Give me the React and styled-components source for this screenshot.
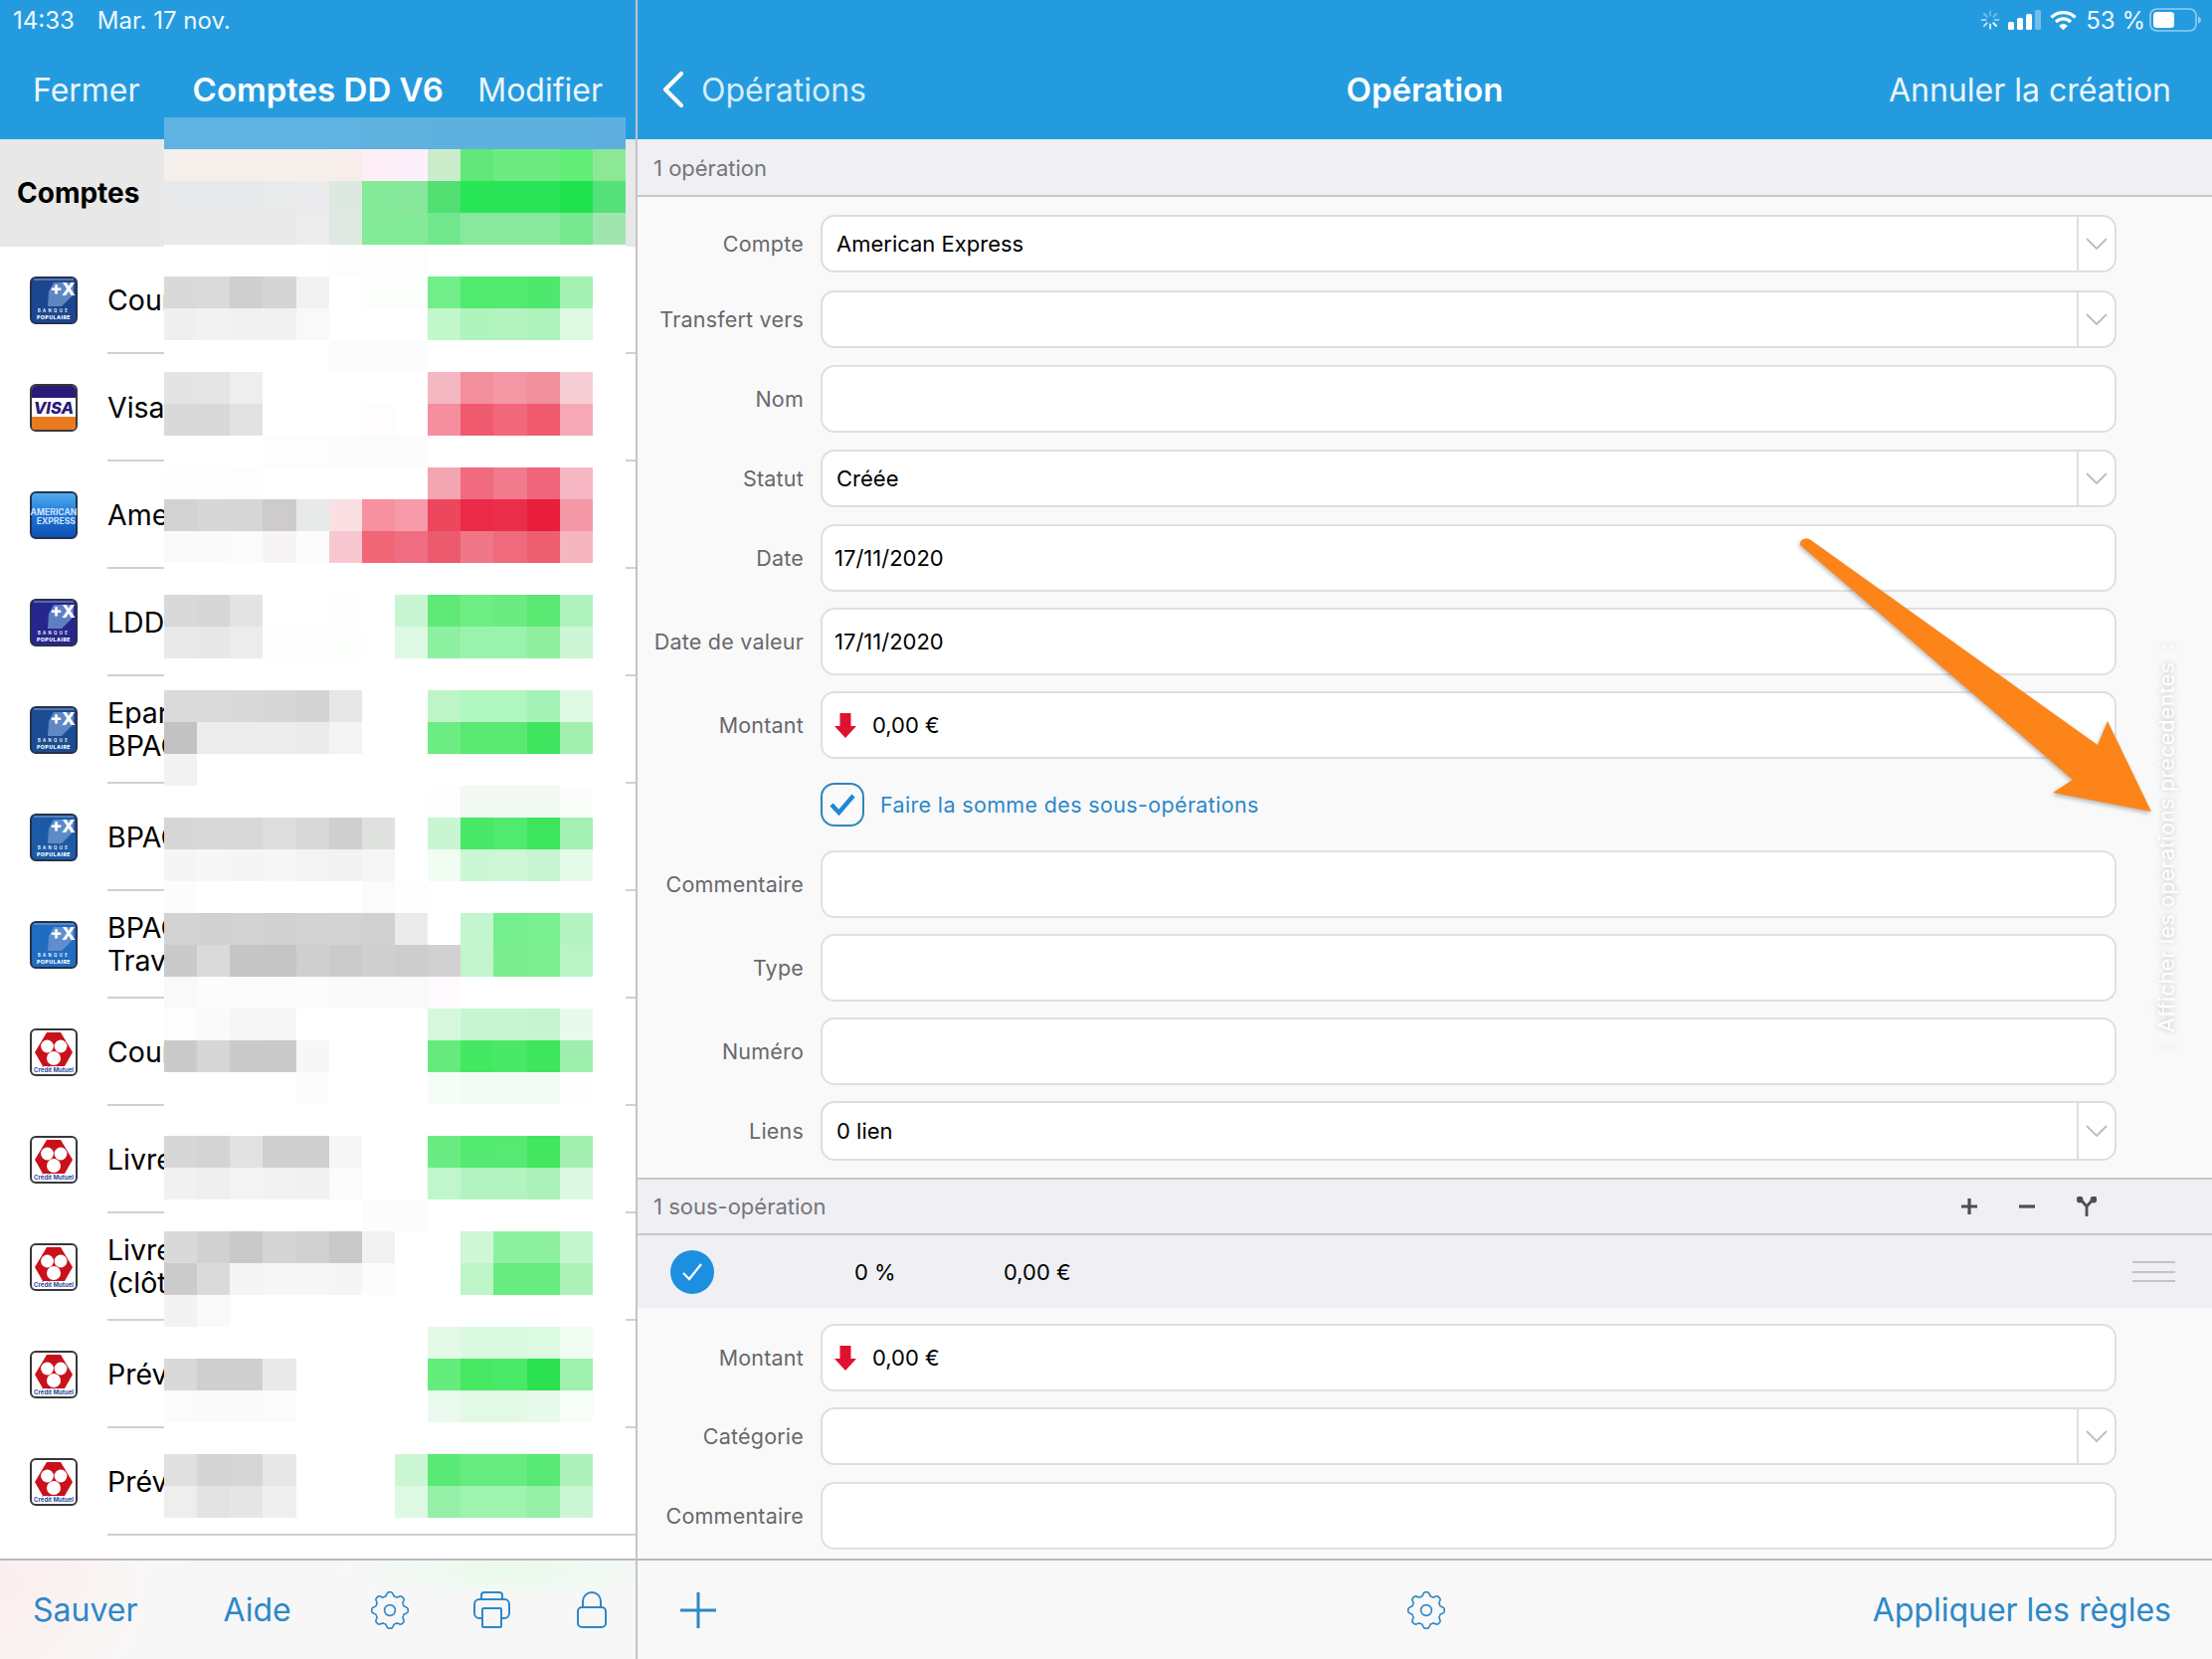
import React from "react";
import styled, { createGlobalStyle } from "styled-components";

const FONT = `Inter, "Liberation Sans", sans-serif`;
const BLUE = "#259bdf";
const TINT = "#2d88c8";

const GlobalStyle = createGlobalStyle`
  html, body { margin: 0; padding: 0; background: #f9f9f9; }
  * { box-sizing: border-box; }
  body { font-family: ${FONT}; }
`;

// pixelated cover over the accounts, one line per 32px row; missing cells are white
const MOSAIC = [
  "5fb3e2 5fb3e2 5fb3e2 5fb3e2 5fb3e2 5fb3e2 5fb2de 5fb2de 5eb1df 5eb1df 5eb1df 5eb1df 5eb1df 5faee0",
  "f5efec f5efec f5efec f5efec f5efec f7eeec fdeff5 fdf0fb cbeccb 62e87a 6eea82 6eea82 62ed79 8de896",
  "e8e9ea e8e9ea e8e9ea e9eaea ebeaec dde8e0 84e998 87e89b 52e073 28e556 2ae558 2ae558 1fe24d 56e27a",
  "e9e9e9 e9e9e9 e9e9e9 e9e9e9 ececec dfe9e2 83ea97 83ea97 72e88e 88e99e 88e99e 88e99e 76e890 a0e5ad",
  "fff fff fff fff fff fdfdfd fdfdfd fdfdfd",
  "d9d9d9 dadada cfcfcf d5d5d5 f2f2f2 fff fcfefc fcfefc 72ee8a 50ea70 53ea72 4fe86f a3f2b3",
  "efefef f2f2f2 f1f1f1 f1f1f1 f9f9f9 fff fff fff c2f6cb aff3bd b3f3c0 aff2bc ddf9e2",
  "fff fff fff fff fff fcfcfc fcfcfc fcfcfc",
  "e4e4e4 e5e5e5 eeeeee fff fff fff fff fff f4b8c2 f38e9d f497a5 f2909d f6cdd5",
  "d9d9d9 d9d9d9 e2e2e2 fff fff fff fefcfc fff f58fa0 f05a6f f3677c ef5a6e f6a8b6",
  "fff fff fff fdfdfd fdfdfd fcfcfc fbfbfb fbfbfb",
  "fefefe fefefe fdfdfd fff fff fff fff fff f4a5b2 f06a80 f27a8d ef647a f6b6c3",
  "d2d2d2 d6d6d6 d6d6d6 cdcbcc e8eaea fadfe3 f6919f f79aa9 ec475d ea2a46 ea2e49 e91e3c f498a8",
  "fafafa fafafa fbfbfb f6f4f5 fcfcfc f8c8d2 f06677 f06c80 ec5a6e f07788 ee6a7c ec5e70 f5b6c0",
  "",
  "d9d9d9 d7d7d7 e3e3e3 fff fff fdfefd fff c8f6d2 5fea78 70ee86 6ceb82 5ae873 b0f2bd",
  "e9e9e9 e8e8e8 ececec fdfdfd fdfdfd fcfefc fff def9e4 8ef0a1 9af3ac 9af3ac 8fef9f ccf6d4",
  "",
  "dadada dadada d9d9d9 d7d7d7 d3d3d3 e7e7e7 fff fff bdf5c9 aff6c0 aff6c0 a5f3b7 dff9e4",
  "c2c2c2 ececec ededed ededed ebebeb f4f4f4 fff fff 6cec82 5ae873 5ae873 3fe55f a3efb0",
  "f2f2f2",
  "fff fff fff fff fff fff fff fff fdfefd f2faf3 f2faf3 f2faf3 fbfdfb",
  "d7d7d7 d8d8d8 d8d8d8 dddddd d8d8d8 cfcfcf dfe1df fff c8f6d2 48e868 4fea6e 3ce55c a2f0b4",
  "f5f5f5 f7f7f7 f5f5f5 f6f6f6 f4f4f4 f2f2f2 f5f6f5 fff f1fcf2 cbf7d4 cdf7d6 c9f6d2 e7fbeb",
  "fcfcfc fff fff fff fff fff fbfbfb fefefe",
  "d2d2d2 d1d1d1 d2d2d2 d1d1d1 d2d2d2 d3d3d3 d1d1d1 eaebea fff c3f6ce 75ee8e 78ef90 b3f3c2",
  "cacaca dadada c5c5c5 c5c5c5 cfcfcf cbcbcb cfcfcf cccdcc d2d1d2 c3f5cd 7aed90 7aee91 b9f4c6",
  "f9f9f9 fcfcfc fbfbfb fbfbfb fbfbfb fafafa f9f9f9 f9f9f9 fdf9fc",
  "fdfdfd fafafa f6f6f6 f6f6f6 fff fff fff fff d5f8dc c5f6cf c5f6cf c4f5ce e8fbeb",
  "cacaca d6d6d6 c9c9c9 cacaca f7f7f7 fff fff fff 66ea7e 45e863 49e967 3fe55d 9eefae",
  "fff fff fff fff fcfcfc fff fff fff f6fcf7 f3fbf4 f3fbf4 f4fbf5 fdfefd",
  "",
  "d7d7d7 d4d4d4 e2e2e2 cfcfcf cfcfcf f6f6f6 fff fff 6bec83 54ea71 56ea73 42e65f a3efb0",
  "f1f1f1 efefef f4f4f4 f2f2f2 f1f1f1 fbfbfb fff fff c0f6cb b2f4bf b2f4bf aaf2b8 dcf8e1",
  "fff fff fff fff fff fff fcfcfc fcfcfc",
  "d9d9d9 d1d1d1 c9c9c9 d5d5d5 d0d0d0 c9c9c9 f2f2f2 fff fff cff7d6 8ef0a1 8ef0a1 c4f5cd",
  "cbcbcb dadada f4f4f4 f7f7f7 f7f7f7 f5f5f5 fcfcfc fff fff bdf5c8 66ec80 66ec80 adf2b9",
  "f3f3f3 f9f9f9",
  "fff fff fff fff fff fff fff fff e5f9e9 dbf9e0 dbf9e0 dcf9e1 f1fcf3",
  "d9d9d9 cfcfcf cfcfcf e9e9e9 fff fff fff fff 64ec7c 47e864 4ae967 2ce250 9ff0ae",
  "fbfbfb fafafa fafafa fbfbfb fff fff fff fff ebfaee e2f9e6 e2f9e6 e8faeb f7fdf8",
  "",
  "e0e0e0 d5d5d5 d6d6d6 e7e7e7 fff fff fff cbf6d3 5ae976 66ec80 66ec80 58e874 adf2bb",
  "eeeeee e3e3e3 e6e6e6 efefef fff fff fff def9e4 94f0a7 9ef3ae 9ef3ae 94f0a6 cbf6d3",
];

const ACCOUNTS = [
  { bank: "bp", color: "#1c4690", lines: ["Courant"] },
  { bank: "visa", lines: ["Visa"] },
  { bank: "amex", lines: ["American Express"] },
  { bank: "bp", color: "#27268c", lines: ["LDD"] },
  { bank: "bp", color: "#1b4c92", lines: ["Epargne", "BPACE"] },
  { bank: "bp", color: "#1d5aa6", lines: ["BPACE"] },
  { bank: "bp", color: "#1f6cc0", lines: ["BPACE", "Travaux"] },
  { bank: "cm", lines: ["Courant"] },
  { bank: "cm", lines: ["Livret"] },
  { bank: "cm", lines: ["Livret", "(clôturé)"] },
  { bank: "cm", lines: ["Prévoyance"] },
  { bank: "cm", lines: ["Prévoyance"] },
];

const Page = styled.div`
  width: 2224px;
  height: 1668px;
  display: flex;
  overflow: hidden;
  position: relative;
`;
const LeftPane = styled.div`
  width: 641px;
  flex-shrink: 0;
  display: flex;
  flex-direction: column;
  position: relative;
  background: #fff;
  border-right: 2px solid #c4c4c8;
`;
const RightPane = styled.div`
  flex: 1;
  display: flex;
  flex-direction: column;
  position: relative;
  background: #f9f9f9;
`;
const Header = styled.header`
  height: 140px;
  flex-shrink: 0;
  background: ${BLUE};
  color: #fff;
`;
const StatusBar = styled.div`
  height: 40px;
  display: flex;
  align-items: center;
  justify-content: ${(p) => (p.$right ? "flex-end" : "flex-start")};
  padding: ${(p) => (p.$right ? "0 11px 0 0" : "0 0 0 13px")};
  font-size: 24px;
  color: #eef7fd;
`;
const StatusDate = styled.span`
  margin-left: 23px;
`;
const StatusIcons = styled.div`
  display: flex;
  align-items: center;
  gap: 9px;
`;
const NavLeft = styled.nav`
  height: 100px;
  display: flex;
  align-items: center;
  padding: 0 33px;
  font-size: 32px;
`;
const NavRight = styled.nav`
  height: 100px;
  display: grid;
  grid-template-columns: 1fr auto 1fr;
  align-items: center;
  padding: 0 41px;
  font-size: 32px;
`;
const NavTitle = styled.div`
  font-size: 33px;
  font-weight: 600;
  margin-left: ${(p) => p.$offset || 0}px;
`;
const NavAction = styled.div`
  color: #eaf6fd;
  text-align: ${(p) => (p.$end ? "right" : "left")};
  margin-left: ${(p) => (p.$end ? "auto" : 0)};
`;
const BackLink = styled.div`
  display: flex;
  align-items: center;
  gap: 17px;
  margin-left: -16px;
  color: #d6edfa;
`;

const AccountsHead = styled.div`
  height: 108px;
  flex-shrink: 0;
  display: flex;
  align-items: center;
  padding-left: 17px;
  background: #e8e8e8;
  color: #000;
  font-size: 28px;
  font-weight: 700;
`;
const AccountList = styled.div`
  flex: 1;
`;
const AccountRow = styled.div`
  height: 108px;
  display: flex;
`;
const BankSlot = styled.div`
  width: 108px;
  flex-shrink: 0;
  display: flex;
  align-items: center;
  padding-left: 30px;
`;
const AccountBody = styled.div`
  flex: 1;
  min-width: 0;
  display: flex;
  flex-direction: column;
  justify-content: center;
  border-bottom: 2px solid #d0d0d4;
  font-size: 28.5px;
  line-height: 33px;
  color: #000;
  white-space: nowrap;
  overflow: hidden;
`;
const Mosaic = styled.svg`
  position: absolute;
  left: 165px;
  top: 118px;
  display: block;
`;

const Toolbar = styled.footer`
  height: 101px;
  flex-shrink: 0;
  margin-top: auto;
  display: flex;
  align-items: center;
  border-top: 2px solid #b9b9bc;
  padding: 0 33px;
  color: ${TINT};
  font-size: 32px;
  background: ${(p) =>
    p.$tinted
      ? `radial-gradient(circle at 0 20px, #fdeeee 0, #f8f7f7 150px, transparent 230px),
         radial-gradient(ellipse at 510px 10px, #e9fbec 0, #f7f7f7 170px, transparent 260px), #f7f7f7`
      : "#f8f8f8"};
`;
const ToolLabel = styled.span`
  margin-left: ${(p) => p.$left || 0}px;
`;
const ToolIcon = styled.svg`
  display: block;
  flex-shrink: 0;
  margin-left: ${(p) => p.$left || 0}px;
  margin-right: ${(p) => p.$right || 0}px;
`;

const SectionBar = styled.div`
  height: ${(p) => p.$h}px;
  flex-shrink: 0;
  display: flex;
  align-items: center;
  padding: ${(p) => (p.$lined ? "0 16px" : "2px 16px 0")};
  background: #efeff4;
  border-bottom: 2px solid #c8c7cc;
  border-top: ${(p) => (p.$lined ? "2px solid #c8c7cc" : "0")};
  color: #76767a;
  font-size: 22px;
`;
const SectionTools = styled.div`
  margin-left: auto;
  margin-right: 100px;
  display: flex;
  align-items: center;
  gap: 42px;
`;
const Form = styled.div`
  flex: none;
  padding-right: 96px;
  padding-bottom: ${(p) => p.$bottom || 0}px;
`;
const FormRow = styled.div`
  display: flex;
  align-items: center;
  margin-top: ${(p) => p.$top ?? 16}px;
`;
const Label = styled.div`
  width: 167px;
  flex-shrink: 0;
  margin-right: 17px;
  text-align: right;
  color: #68686b;
  font-size: 21.5px;
  letter-spacing: 0.2px;
`;
const Field = styled.div`
  flex: 1;
  height: ${(p) => (p.$select ? 58 : 68)}px;
  display: flex;
  align-items: center;
  background: #fff;
  border: ${(p) => (p.$select ? "2.5px solid #dedee0" : "2px solid #e0e0e2")};
  border-radius: 14px;
  padding-left: ${(p) => (p.$select ? 14 : 12)}px;
  color: #000;
  font-size: 22px;
`;
const Liens = styled(Field)`
  height: 60px;
`;
const ChevronBox = styled.div`
  margin-left: auto;
  width: 38px;
  height: 100%;
  display: flex;
  align-items: center;
  justify-content: center;
  border-left: 2px solid #dedee0;
`;
const AmountText = styled.span`
  margin-left: 16px;
`;
const CheckBox = styled.div`
  width: 44px;
  height: 44px;
  display: flex;
  align-items: center;
  justify-content: center;
  border: 2.5px solid #2f86bd;
  border-radius: 14px;
`;
const CheckLabel = styled.div`
  margin-left: 16px;
  color: ${TINT};
  font-size: 21.5px;
  letter-spacing: 0.35px;
`;
const SplitRow = styled.div`
  height: 73px;
  flex-shrink: 0;
  display: flex;
  align-items: center;
  background: #efeff4;
  padding: 0 37px 0 33px;
  color: #000;
  font-size: 22px;
`;
const SplitValue = styled.span`
  width: ${(p) => p.$w}px;
  flex-shrink: 0;
`;
const Circle = styled.div`
  width: 44px;
  height: 44px;
  flex-shrink: 0;
  margin-right: 141px;
  display: flex;
  align-items: center;
  justify-content: center;
  border-radius: 50%;
  background: #1d8fe0;
`;
const Grip = styled.div`
  margin-left: auto;
  width: 43px;
  height: 21px;
  border-top: 2px solid #c4c4c8;
  border-bottom: 2px solid #c4c4c8;
  position: relative;
  &::after {
    content: "";
    position: absolute;
    left: 0;
    right: 0;
    top: 7.5px;
    height: 2px;
    background: #c4c4c8;
  }
`;
const RightTools = styled(Toolbar)`
  padding: 0 41px 0 43px;
  display: grid;
  grid-template-columns: 1fr auto 1fr;
`;
const EndLabel = styled.span`
  text-align: right;
`;
const SideHint = styled.div`
  position: absolute;
  left: ${2165 - 641}px;
  top: 640px;
  height: 424px;
  writing-mode: vertical-rl;
  transform: rotate(180deg);
  text-align: center;
  white-space: pre;
  color: #fff;
  font-size: 21.5px;
  letter-spacing: 0.25px;
  text-shadow: 0 0 6px rgba(0, 0, 0, 0.25);
`;
const ArrowMark = styled.svg`
  position: absolute;
  left: ${1800 - 641}px;
  top: 530px;
  overflow: visible;
  filter: drop-shadow(-1px 2px 2px rgba(0, 0, 0, 0.28));
`;

function gearPath(c, inner, outer) {
  const pts = [];
  for (let i = 0; i < 160; i++) {
    const t = (i / 160) * Math.PI * 2;
    const s = Math.max(-1, Math.min(1, Math.sin(8 * t + Math.PI / 2) * 1.5));
    const r = inner + ((outer - inner) * (s + 1)) / 2;
    pts.push(`${(c + r * Math.sin(t)).toFixed(2)} ${(c - r * Math.cos(t)).toFixed(2)}`);
  }
  return `M${pts.join("L")}Z`;
}

function Gear({ left, right }) {
  return (
    <ToolIcon $left={left} $right={right} width="38" height="38" viewBox="0 0 38 38" fill="none" stroke={TINT} strokeWidth="1.6">
      <path d={gearPath(19, 14.6, 18.2)} strokeLinejoin="round" />
      <circle cx="19" cy="19" r="5.4" />
    </ToolIcon>
  );
}

function Chevron() {
  return (
    <svg width="24" height="14" viewBox="0 0 24 14" fill="none" stroke="#bcbcc0" strokeWidth="1.8">
      <path d="M2 2l10 10L22 2" />
    </svg>
  );
}

function DownArrow() {
  return (
    <svg width="22" height="25" viewBox="0 0 22 25" style={{ flexShrink: 0 }}>
      <path d="M5.5 0h11v13H22L11 25 0 13h5.5z" fill="#e0112f" />
    </svg>
  );
}

function BankLogo({ bank, color }) {
  if (bank === "visa") {
    return (
      <svg width="48" height="48" viewBox="0 0 48 48">
        <rect x="1" y="1" width="46" height="46" rx="5" fill="#fff" stroke="#38383c" strokeWidth="2" />
        <path d="M2 6a4 4 0 0 1 4-4h36a4 4 0 0 1 4 4v8H2z" fill="#2a1a78" />
        <path d="M2 33h44v9a4 4 0 0 1-4 4H6a4 4 0 0 1-4-4z" fill="#ea7a1e" />
        <text x="24" y="29.5" textAnchor="middle" fontFamily={FONT} fontSize="16.5" fontWeight="800" fontStyle="italic" fill="#2a1a78">VISA</text>
      </svg>
    );
  }
  if (bank === "amex") {
    return (
      <svg width="48" height="48" viewBox="0 0 48 48">
        <defs>
          <linearGradient id="amexFill" x1="0" y1="0" x2="0" y2="1">
            <stop offset="0" stopColor="#52aef0" />
            <stop offset="0.5" stopColor="#1f74d6" />
            <stop offset="1" stopColor="#0f4fb4" />
          </linearGradient>
        </defs>
        <rect x="1" y="1" width="46" height="46" rx="5" fill="url(#amexFill)" stroke="#23344e" strokeWidth="2" />
        <text x="24" y="24" textAnchor="middle" fontFamily={FONT} fontSize="8.6" fontWeight="700" fill="#cfe4fb">AMERICAN</text>
        <text x="46" y="33" textAnchor="end" fontFamily={FONT} fontSize="8.6" fontWeight="700" fill="#cfe4fb">EXPRESS</text>
      </svg>
    );
  }
  if (bank === "cm") {
    return (
      <svg width="48" height="48" viewBox="0 0 48 48">
        <rect x="1" y="1" width="46" height="46" rx="5" fill="#fff" stroke="#38383c" strokeWidth="2" />
        <path d="M17 4h14l12 20-8 14H13L5 24z" fill="#c9111c" />
        <circle cx="17.5" cy="18" r="6.4" fill="#fff" />
        <circle cx="31" cy="18" r="6.4" fill="#fff" />
        <circle cx="24" cy="30" r="7" fill="#fff" />
        <text x="24" y="44" textAnchor="middle" fontFamily={FONT} fontSize="6" fontWeight="700" fill="#2c4a9c">Crédit Mutuel</text>
      </svg>
    );
  }
  return (
    <svg width="48" height="48" viewBox="0 0 48 48">
      <rect x="1" y="1" width="46" height="46" rx="5" fill={color} stroke="#26324e" strokeWidth="2" />
      <path d="M4 3h40" stroke="#8ea7d2" strokeWidth="1" />
      <path d="M24 6h20v12L32 30H18l1-15z" fill="#6f96d0" opacity="0.8" />
      <text x="33" y="19" textAnchor="middle" fontFamily={FONT} fontSize="18" fontWeight="800" fill="#fff">+X</text>
      <text x="24" y="36" textAnchor="middle" fontFamily={FONT} fontSize="4.2" fontWeight="600" letterSpacing="2.4" fill="#fff">BANQUE</text>
      <text x="24" y="43" textAnchor="middle" fontFamily={FONT} fontSize="5.2" fontWeight="800" letterSpacing="0.5" fill="#fff">POPULAIRE</text>
    </svg>
  );
}

function MosaicCover() {
  const h = MOSAIC.length * 32;
  return (
    <Mosaic width="464" height={h} viewBox={`0 0 462 ${h}`} preserveAspectRatio="none" shapeRendering="crispEdges">
      {MOSAIC.flatMap((line, row) => {
        const cells = line ? line.split(" ") : [];
        return Array.from({ length: 14 }, (_, col) => (
          <rect key={`${row}-${col}`} x={col * 33} y={row * 32} width="33" height="32" fill={`#${cells[col] || "fff"}`} />
        ));
      })}
    </Mosaic>
  );
}

function StatusGlyphs() {
  return (
    <StatusIcons>
      <svg width="20" height="20" viewBox="0 0 20 20" stroke="#fff" strokeWidth="1.8" strokeLinecap="round">
        <path d="M10 1.5v4" opacity="0.3" />
        <path d="M16 4l-2.8 2.8" opacity="0.35" />
        <path d="M18.5 10h-4" opacity="0.45" />
        <path d="M16 16l-2.8-2.8" opacity="1" />
        <path d="M10 18.5v-4" opacity="0.85" />
        <path d="M4 16l2.8-2.8" opacity="0.7" />
        <path d="M1.5 10h4" opacity="0.55" />
        <path d="M4 4l2.8 2.8" opacity="0.4" />
      </svg>
      <svg width="33" height="22" viewBox="0 0 33 22" fill="#fff" style={{ marginLeft: -1 }}>
        <rect x="0" y="13" width="6" height="8" rx="1.5" />
        <rect x="9" y="9" width="6" height="12" rx="1.5" />
        <rect x="18" y="5" width="6" height="16" rx="1.5" />
        <rect x="27" y="1" width="6" height="20" rx="1.5" opacity="0.35" />
      </svg>
      <svg width="27" height="21" viewBox="0 0 27 21" fill="none" stroke="#fff" strokeWidth="3.2">
        <path d="M1.5 7.5a17 17 0 0 1 24 0" />
        <path d="M6 12a10.6 10.6 0 0 1 15 0" />
        <path d="M13.5 20l-4-4a5.6 5.6 0 0 1 8 0z" fill="#fff" strokeWidth="0.5" />
      </svg>
      <span>53 %</span>
      <svg width="52" height="24" viewBox="0 0 52 24" style={{ marginLeft: -5 }}>
        <rect x="1" y="1" width="46" height="22" rx="6.5" fill="none" stroke="#fff" strokeOpacity="0.5" strokeWidth="1.6" />
        <rect x="4" y="4" width="21" height="16" rx="3.5" fill="#fff" />
        <path d="M49 8.5c2 .5 3 2 3 3.5s-1 3-3 3.5z" fill="#fff" fillOpacity="0.5" />
      </svg>
    </StatusIcons>
  );
}

function SelectRow({ label, value, top }) {
  return (
    <FormRow $top={top}>
      <Label>{label}</Label>
      <Field $select>
        {value}
        <ChevronBox><Chevron /></ChevronBox>
      </Field>
    </FormRow>
  );
}

function InputRow({ label, value, top }) {
  return (
    <FormRow $top={top}>
      <Label>{label}</Label>
      <Field>{value}</Field>
    </FormRow>
  );
}

function AmountRow({ top }) {
  return (
    <FormRow $top={top}>
      <Label>Montant</Label>
      <Field>
        <DownArrow />
        <AmountText>0,00 €</AmountText>
      </Field>
    </FormRow>
  );
}

export default function App() {
  return (
    <Page>
      <GlobalStyle />
      <LeftPane>
        <Header>
          <StatusBar>
            14:33
            <StatusDate>Mar. 17 nov.</StatusDate>
          </StatusBar>
          <NavLeft>
            <NavAction>Fermer</NavAction>
            <NavTitle $offset={53}>Comptes DD V6</NavTitle>
            <NavAction $end>Modifier</NavAction>
          </NavLeft>
        </Header>
        <AccountsHead>Comptes</AccountsHead>
        <AccountList>
          {ACCOUNTS.map((a, i) => (
            <AccountRow key={i}>
              <BankSlot><BankLogo bank={a.bank} color={a.color} /></BankSlot>
              <AccountBody>
                {a.lines.map((l) => <div key={l}>{l}</div>)}
              </AccountBody>
            </AccountRow>
          ))}
        </AccountList>
        <Toolbar $tinted>
          <span>Sauver</span>
          <ToolLabel $left={86}>Aide</ToolLabel>
          <Gear left={80} />
          <ToolIcon $left={65} width="37" height="37" viewBox="0 0 37 37" fill="none" stroke={TINT} strokeWidth="2">
            <path d="M8 8V4a3 3 0 0 1 3-3h15a3 3 0 0 1 3 3v4" />
            <path d="M9 27H6a5 5 0 0 1-5-5V13a5 5 0 0 1 5-5h25a5 5 0 0 1 5 5v9a5 5 0 0 1-5 5h-3" />
            <rect x="9" y="17" width="19" height="19" rx="1" />
          </ToolIcon>
          <ToolIcon $left={67} width="30" height="37" viewBox="0 0 30 37" fill="none" stroke={TINT} strokeWidth="2">
            <path d="M6 16V10a9 9 0 0 1 18 0v6" />
            <rect x="1" y="16" width="28" height="20" rx="4" />
          </ToolIcon>
        </Toolbar>
        <MosaicCover />
      </LeftPane>

      <RightPane>
        <Header>
          <StatusBar $right><StatusGlyphs /></StatusBar>
          <NavRight>
            <BackLink>
              <svg width="22" height="38" viewBox="0 0 22 38" fill="none" stroke="#fff" strokeWidth="4.2" strokeLinecap="round" strokeLinejoin="round">
                <path d="M19 3L3 19l16 16" />
              </svg>
              Opérations
            </BackLink>
            <NavTitle>Opération</NavTitle>
            <NavAction $end>Annuler la création</NavAction>
          </NavRight>
        </Header>
        <SectionBar $h={58}>1 opération</SectionBar>
        <Form $bottom={17}>
          <SelectRow label="Compte" value="American Express" top={18} />
          <SelectRow label="Transfert vers" top={18} />
          <InputRow label="Nom" top={17} />
          <SelectRow label="Statut" value="Créée" top={17} />
          <InputRow label="Date" value="17/11/2020" top={17} />
          <InputRow label="Date de valeur" value="17/11/2020" />
          <AmountRow />
          <FormRow $top={24}>
            <Label />
            <CheckBox>
              <svg width="28" height="24" viewBox="0 0 28 24" fill="none" stroke="#1e88d6" strokeWidth="4.4">
                <path d="M3 12l7.5 8L25 3" />
              </svg>
            </CheckBox>
            <CheckLabel>Faire la somme des sous-opérations</CheckLabel>
          </FormRow>
          <InputRow label="Commentaire" top={24} />
          <InputRow label="Type" />
          <InputRow label="Numéro" />
          <FormRow>
            <Label>Liens</Label>
            <Liens $select>
              0 lien
              <ChevronBox><Chevron /></ChevronBox>
            </Liens>
          </FormRow>
        </Form>
        <SectionBar $h={58} $lined>
          1 sous-opération
          <SectionTools>
            <svg width="16" height="16" viewBox="0 0 16 16" stroke="#4e4e52" strokeWidth="3.2">
              <path d="M8 0v16M0 8h16" />
            </svg>
            <svg width="16" height="16" viewBox="0 0 16 16" stroke="#4e4e52" strokeWidth="3.2">
              <path d="M0 8h16" />
            </svg>
            <svg width="20" height="20" viewBox="0 0 20 20" fill="none" stroke="#4e4e52" strokeWidth="2.8">
              <path d="M10 20V10M10 10L3 2M10 10l7-8" />
              <circle cx="3" cy="3" r="2" fill="#4e4e52" />
              <circle cx="17" cy="3" r="2" fill="#4e4e52" />
            </svg>
          </SectionTools>
        </SectionBar>
        <SplitRow>
          <Circle>
            <svg width="24" height="20" viewBox="0 0 24 20" fill="none" stroke="#fff" strokeWidth="2.2">
              <path d="M3 11l6 6L21 2" />
            </svg>
          </Circle>
          <SplitValue $w={150}>0 %</SplitValue>
          <SplitValue $w={80}>0,00 €</SplitValue>
          <Grip />
        </SplitRow>
        <Form>
          <AmountRow />
          <SelectRow label="Catégorie" />
          <InputRow label="Commentaire" top={17} />
        </Form>
        <RightTools>
          <ToolIcon width="36" height="36" viewBox="0 0 36 36" stroke={TINT} strokeWidth="3">
            <path d="M18 0v36M0 18h36" />
          </ToolIcon>
          <Gear />
          <EndLabel>Appliquer les règles</EndLabel>
        </RightTools>
        <SideHint>{":  Afficher les opérations précédentes  :"}</SideHint>
        <ArrowMark width="364" height="290" viewBox="0 0 364 290" fill="#fd8419">
          <path d="M15 11.5Q18 11 20 12.5L309 219 319 195 363 286 264 267 284 254 10 18Q9 13 15 11.5Z" />
        </ArrowMark>
      </RightPane>
    </Page>
  );
}
